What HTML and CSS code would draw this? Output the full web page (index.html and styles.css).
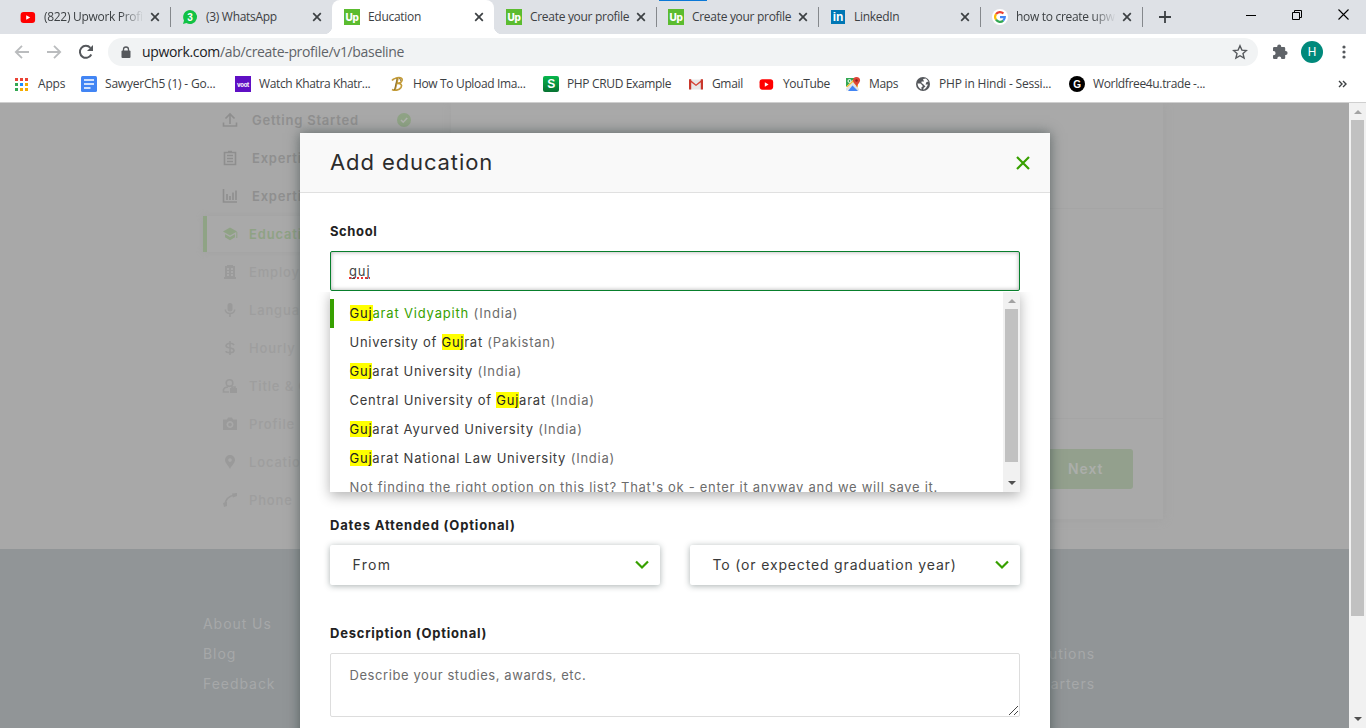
FILE: index.html
```html
<!DOCTYPE html>
<html lang="en">
<head>
<meta charset="utf-8">
<title>Education</title>
<link rel="stylesheet" href="styles.css">
</head>
<body>
<svg class="defs" width="0" height="0">
  <symbol id="x" viewBox="0 0 10 10"><path d="M1.2 1.2 8.8 8.8M8.8 1.2 1.2 8.8" stroke="#3c4043" stroke-width="1.7" fill="none"/></symbol>
  <symbol id="yt" viewBox="0 0 16 16"><rect x=".6" y="3" width="14.5" height="11" rx="3" fill="#f00"/><path d="M6.2 6.2 10.2 8.5 6.2 10.8z" fill="#fff"/></symbol>
</svg>
<header class="browser">
  <div class="tabs">
    <div class="loading"></div>
    <div class="tab sep"><svg class="ico"><use href="#yt"/></svg><span class="label fade">(822) Upwork Profi</span><svg class="close"><use href="#x"/></svg></div>
    <div class="tab"><svg class="ico" viewBox="0 0 16 16"><path d="M8 1a7 7 0 1 1-3.6 13L1 15l1-3.6A7 7 0 0 1 8 1z" fill="#12c245"/><text x="8" y="12" text-anchor="middle" class="wa">3</text></svg><span class="label">(3) WhatsApp</span><svg class="close"><use href="#x"/></svg></div>
    <div class="tab active"><span class="ico up">Up</span><span class="label">Education</span><svg class="close"><use href="#x"/></svg></div>
    <div class="tab sep"><span class="ico up">Up</span><span class="label">Create your profile</span><svg class="close"><use href="#x"/></svg></div>
    <div class="tab sep"><span class="ico up">Up</span><span class="label">Create your profile</span><svg class="close"><use href="#x"/></svg></div>
    <div class="tab sep"><span class="ico li">in</span><span class="label">LinkedIn</span><svg class="close"><use href="#x"/></svg></div>
    <div class="tab sep"><svg class="ico" viewBox="0 0 16 16"><circle cx="8" cy="8" r="8" fill="#fff"/><g fill="none" stroke-width="2.2"><path d="M4 5.2A4.8 4.8 0 0 1 11.4 4.6" stroke="#ea4335"/><path d="M4 10.7A4.8 4.8 0 0 1 4 5.2" stroke="#fbbc05"/><path d="M11.2 11.6A4.8 4.8 0 0 1 4 10.7" stroke="#34a853"/><path d="M8 8.1H12.8A4.8 4.8 0 0 1 11.2 11.6" stroke="#4285f4"/></g></svg><span class="label fade">how to create upw</span><svg class="close"><use href="#x"/></svg></div>
    <svg class="plus" viewBox="0 0 12 12"><path d="M6 0V12M0 6H12" stroke="#3c4043" stroke-width="1.8"/></svg>
    <div class="win">
      <svg width="10" height="10"><path d="M0 5.5H10" stroke="#000"/></svg>
      <svg width="10" height="10"><path d="M.5 2.5h7v7h-7zM2.5 2.5V.5h7v7h-2" fill="none" stroke="#000"/></svg>
      <svg width="11" height="11"><path d="M.5.5l10 10M10.500.5l-10 10" stroke="#000" stroke-width="1.1"/></svg>
    </div>
  </div>
  <div class="toolbar">
    <svg class="nav" viewBox="0 0 16 16"><path d="M15 8H2M8 1.800 1.800 8 8 14.200" fill="none" stroke="#babcbe" stroke-width="1.800"/></svg>
    <svg class="nav" viewBox="0 0 16 16"><path d="M1 8H14M8 1.800 14.200 8 8 14.200" fill="none" stroke="#babcbe" stroke-width="1.800"/></svg>
    <svg class="nav" viewBox="0 0 16 16"><path d="M13.300 10.500A6 6 0 1 1 12.400 3.800" fill="none" stroke="#55585c" stroke-width="2"/><path d="M15 1V7H9z" fill="#55585c"/></svg>
    <div class="omnibox">
      <svg class="lock" viewBox="0 0 10 13"><rect x="1" y="4.500" width="9" height="7.500" rx="1" fill="#55585c"/><path d="M3 5V3.500a2.500 2.500 0 0 1 5 0V5" fill="none" stroke="#55585c" stroke-width="1.300"/></svg>
      <div class="url">upwork.com<span>/ab/create-profile/v1/baseline</span></div>
      <svg class="star" viewBox="0 0 16 16"><path d="M8 1.800 9.900 6.100 14.500 6.500 11 9.600 12.100 14.100 8 11.700 3.900 14.100 5 9.600 1.500 6.500 6.100 6.100z" fill="none" stroke="#55585c" stroke-width="1.400"/></svg>
    </div>
    <svg class="puzzle" viewBox="0 0 16 16"><path d="M1 4.200Q1 3 2.200 3H5.200V2.600a2 2 0 0 1 4 0V3H12q1.200 0 1.200 1.200V7h.4a2 2 0 0 1 0 4h-.4v3q0 1-1.200 1H9.300v-.5a2 2 0 0 0-4 0V15H2.200Q1 15 1 14V11.300h.5a2.100 2.100 0 0 0 0-4.200H1z" fill="#5f6368"/></svg>
    <span class="avatar">H</span>
    <svg class="kebab" viewBox="0 0 4 14"><g fill="#55585c"><circle cx="2" cy="2" r="1.600"/><circle cx="2" cy="7" r="1.600"/><circle cx="2" cy="12" r="1.600"/></g></svg>
  </div>
  <nav class="bookmarks">
    <div class="bm apps"><svg class="ico" viewBox="0 0 16 16"><path d="M0 2h3v3H0zM5 2h3v3H5zM10 2h3v3h-3z" fill="#ea4335"/><path d="M0 7h3v3H0zM0 12h3v3H0z" fill="#34a853"/><path d="M5 7h3v3H5z" fill="#1a8cff"/><path d="M10 7h3v3h-3zM5 12h3v3H5zM10 12h3v3h-3z" fill="#f5ac00"/></svg><span>Apps</span></div>
    <div class="bm b2"><svg class="ico" viewBox="0 0 16 16"><rect width="16" height="16" rx="1.500" fill="#4285f4"/><path d="M3 4h10M3 8h10M3 12h6.500" stroke="#fff" stroke-width="1.700"/></svg><span>SawyerCh5 (1) - Go...</span></div>
    <div class="bm b3"><span class="ico voot">voot</span><span>Watch Khatra Khatr...</span></div>
    <div class="bm narrow b4"><svg class="ico" viewBox="0 0 15 16"><path d="M2 4.500C4 2 8 2 8 2L5 14M5 2.500C9 1 13 1.500 12 4.500 11.300 7 8 7.500 6.500 7.500 11 7 12.500 9 11 11.500 9 14.500 4.500 14.800 2 13.500" fill="none" stroke="#c39b38" stroke-width="1.700"/><path d="M9 2.500Q11 2.500 10.500 5M7 2.500 4.500 14" fill="none" stroke="#6e551d" stroke-width=".7"/></svg><span>How To Upload Ima...</span></div>
    <div class="bm b5"><span class="ico stx">S</span><span>PHP CRUD Example</span></div>
    <div class="bm narrow b6"><svg class="ico" viewBox="0 0 15 16"><path d="M1 3.500h12v10H1z" fill="#e8e8e8"/><path d="M1 3.500 7 8.500 13 3.500V5.500L7 10 1 5.500z" fill="#d54134"/><path d="M0 3.200h2.200v10.300H0zM11.800 3.200H14v10.300h-2.200z" fill="#c9382c"/></svg><span>Gmail</span></div>
    <div class="bm narrow b7"><svg class="ico"><use href="#yt" x="-1"/></svg><span>YouTube</span></div>
    <div class="bm narrow b8"><svg class="ico" viewBox="0 0 15 16"><path d="M0 2h9L0 11z" fill="#34a853"/><path d="M0 11 9 2h3v12z" fill="#fbc02d"/><path d="M0 12.500 7 6 13 13v1.500H0z" fill="#dfe3e7"/><path d="M2 15 6.500 9.500 12 15z" fill="#4285f4"/><path d="M10.500 1a3.600 3.600 0 0 1 3.600 3.600C14 7 11.500 8 10.700 11 10 8 7 7 7 4.600A3.600 3.600 0 0 1 10.500 1z" fill="#dc4437"/><circle cx="10.500" cy="4.500" r="1.200" fill="#8e2118"/><circle cx="3.500" cy="5" r="1.500" fill="none" stroke="#fff"/></svg><span>Maps</span></div>
    <div class="bm narrow b9"><svg class="ico" viewBox="0 0 15 16"><circle cx="7" cy="8" r="7" fill="#55585c"/><path d="M1.500 7.500H4.500L6.500 9.500V11H5.500V13.500Q2 12 1.500 7.500M7 3 10 2.500 12.500 5.500 10.500 6 9.500 8.500H12L10 12 7.500 14V12L9.500 10.500 7 8 5.500 7V5.500H8z" fill="#fff"/></svg><span>PHP in Hindi - Sessi...</span></div>
    <div class="bm b10"><span class="ico gg">G</span><span>Worldfree4u.trade -...</span></div>
    <svg class="more" viewBox="0 0 9 8"><path d="M1 1 4 4 1 7M5 1 8 4 5 7" fill="none" stroke="#3c4043" stroke-width="1.400"/></svg>
  </nav>
</header>

<main class="viewport">
  <div class="page">
    <div class="content">
      <aside class="steps">
        <div class="step done"><svg viewBox="0 0 16 16"><path d="M8 12V2.500M3.500 6.500 8 2 12.500 6.500M1.500 10.500V14h13V10.500" /></svg><span>Getting Started</span><svg class="check" viewBox="0 0 14 14"><circle cx="7" cy="7" r="7" fill="#8fa385" stroke="none"/><path d="M4 7 6.200 9.200 10.200 5" stroke="#b0b2ae"/></svg></div>
        <div class="step done"><svg viewBox="0 0 16 16"><path d="M2.500 2.500h11v12h-11zM5 5.500h6M5 8.500h6M5 11.500h6M6 1.500h4"/></svg><span>Expertise</span></div>
        <div class="step done"><svg viewBox="0 0 16 16"><path d="M1.500 1V14H15M5 6V12M8 8V12M11 4.500V12M14 2.500V12"/></svg><span>Expertise Level</span></div>
        <div class="step current"><svg viewBox="0 0 16 16"><path class="solid" d="M8 1.500 15 5.500 8 9.500 1 5.500zM3 8.300 8 11 13 8.300V11.300L8 14.200 3 11.300zM14.300 6h1v6h-1z"/></svg><span>Education</span></div>
        <div class="step"><svg viewBox="0 0 16 16"><path class="solid" fill-rule="evenodd" d="M3 2h2V1h6v1h2v11h1v2H2v-2h1zM5 4v2h2V4zM9 4v2h2V4zM5 7v2h2V7zM9 7v2h2V7zM5 10v2h2v-2zM9 10v2h2v-2z"/></svg><span>Employment</span></div>
        <div class="step"><svg viewBox="0 0 16 16"><rect class="solid" x="5.500" y="1" width="5" height="8.500" rx="2.500"/><path d="M3.300 7.500a4.700 4 0 0 0 9.400 0M8 12v3"/></svg><span>Languages</span></div>
        <div class="step"><svg viewBox="0 0 16 16"><path d="M12 5Q11 3.300 8 3.300T4 5.500Q4 7.500 8 8T12 10.500Q12 12.700 8 12.700T4 11M8 1V15"/></svg><span>Hourly Rate</span></div>
        <div class="step"><svg viewBox="0 0 16 16"><circle cx="7.500" cy="5" r="3.300"/><path d="M7 14H1.500V11.500Q2.500 9 6 9M10 10V9h3v1"/><path class="solid" d="M8 10h7v5H8z"/></svg><span>Title &amp; Overview</span></div>
        <div class="step"><svg viewBox="0 0 16 16"><path class="solid" fill-rule="evenodd" d="M1 3.500h4L6 1.500h4l1 2h4V14H1zM8 5a3.500 3.500 0 1 0 .01 0M8 6.700a1.800 1.800 0 1 1-.01 0"/></svg><span>Profile Photo</span></div>
        <div class="step"><svg viewBox="0 0 16 16"><path class="solid" fill-rule="evenodd" d="M8 1a5 5 0 0 1 5 5c0 3-3.500 5.500-5 9-1.500-3.500-5-6-5-9a5 5 0 0 1 5-5M8 4.200a1.800 1.800 0 1 0 .01 0"/></svg><span>Location</span></div>
        <div class="step"><svg viewBox="0 0 16 16"><path d="M3 13Q3.500 4.500 13 3" /><path class="solid" d="M1 11 5 10V14L2 15zM10 1.500 15 1V4L11 5.500z"/></svg><span>Phone</span></div>
      </aside>
      <section class="card">
        <div class="card-top"></div>
        <div class="card-mid"></div>
        <div class="card-foot"><span class="next">Next</span></div>
      </section>
    </div>
    <footer class="footer">
      <ul><li>About Us</li><li>Blog</li><li>Feedback</li></ul>
      <ul class="right"><li>Enterprise Solutions</li><li>Upwork Headquarters</li></ul>
    </footer>
  </div>
  <div class="scroll"><i class="up-arrow"></i><b></b><i class="down-arrow"></i></div>

  <div class="modal">
    <div class="modal-head"><h1>Add education</h1><svg width="14" height="14"><path d="M1 1 13 13M13 1 1 13" stroke="#37a000" stroke-width="2.200"/></svg></div>
    <div class="modal-body">
      <label class="lb-school">School</label>
      <div class="input"><span>guj</span>
        <div class="dropdown">
          <div class="options">
            <div class="opt sel o1"><mark>Guj</mark>arat Vidyapith <em>(India)</em></div>
            <div class="opt o2">University of <mark>Guj</mark>rat <em>(Pakistan)</em></div>
            <div class="opt o3"><mark>Guj</mark>arat University <em>(India)</em></div>
            <div class="opt o4">Central University of <mark>Guj</mark>arat <em>(India)</em></div>
            <div class="opt o5"><mark>Guj</mark>arat Ayurved University <em>(India)</em></div>
            <div class="opt o6"><mark>Guj</mark>arat National Law University <em>(India)</em></div>
            <div class="opt o7"><em>Not finding the right option on this list? That's ok - enter it anyway and we will save it.</em></div>
          </div>
          <div class="mini-scroll"><i class="up-arrow"></i><b></b><i class="down-arrow"></i></div>
        </div>
      </div>
      <label class="dates">Dates Attended (Optional)</label>
      <div class="selects">
        <div class="select"><span class="s1">From</span><svg width="14" height="10"><path d="M1 1.500 7 7.500 13 1.500" fill="none" stroke="#37a000" stroke-width="2.200"/></svg></div>
        <div class="select"><span class="s2">To (or expected graduation year)</span><svg width="14" height="10"><path d="M1 1.500 7 7.500 13 1.500" fill="none" stroke="#37a000" stroke-width="2.200"/></svg></div>
      </div>
      <label class="desc">Description (Optional)</label>
      <div class="area">Describe your studies, awards, etc.<svg class="grip" width="9" height="9"><path d="M0 9 9 0M5 9 9 5" stroke="#444" stroke-width="1"/></svg></div>
    </div>
  </div>
</main>
</body>
</html>
```
FILE: styles.css
```css
* { box-sizing: border-box; }
body { margin: 0; height: 728px; overflow: hidden; display: flex; flex-direction: column; font-family: Inter, sans-serif; background: #fff; }
svg { flex: none; display: block; }
.defs { position: absolute; }

/* Browser frame */
.browser { font-family: "Open Sans", "Noto Sans", sans-serif; font-size: 12px; color: #3c4043; height: 103px; border-bottom: 1px solid #cfcfcf; flex: none; }
.tabs { display: flex; height: 34px; background: #dee1e6; padding-left: 8px; position: relative; align-items: center; }
.loading { position: absolute; left: 659px; top: 0; width: 48px; height: 1px; background: #0a78d7; }
.tab { width: 162px; height: 34px; display: flex; align-items: center; padding: 0 10px 0 12px; position: relative; }
.tab.sep::after { content: ""; position: absolute; right: -1px; top: 7px; width: 1px; height: 20px; background: #85888c; }
.tab.active { background: #fff; border-radius: 8px 8px 0 0; }
.tab.active::before, .tab.active::after { content: ""; position: absolute; bottom: 0; width: 8px; height: 8px; }
.tab.active::before { left: -8px; background: radial-gradient(circle at 0 0, #dee1e6 8px, #fff 8.5px); }
.tab.active::after { right: -8px; background: radial-gradient(circle at 100% 0, #dee1e6 8px, #fff 8.5px); }
.ico { width: 16px; height: 16px; flex: none; display: flex; align-items: center; justify-content: center; line-height: 1; overflow: visible; }
.label { margin-left: 8px; width: 100px; white-space: nowrap; letter-spacing: -.3px; padding-bottom: 1px; }
.fade { -webkit-mask-image: linear-gradient(90deg, #000 76px, transparent 100px); mask-image: linear-gradient(90deg, #000 76px, transparent 100px); }
.close { width: 10px; height: 10px; margin-left: 6px; }
.up { background: #5bbc2f; color: #fff; font: 800 10px Inter, sans-serif; letter-spacing: -.3px; padding-bottom: 1px; }
.li { background: #0077b5; color: #fff; font: bold 12px "Liberation Sans", sans-serif; width: 14px; height: 14px; margin-right: 1px; margin-left: 1px; }
.wa { font: bold 10px "Liberation Sans", sans-serif; fill: #fff; }
.plus { width: 12px; height: 12px; margin-left: 17px; }
.win { margin-left: auto; display: flex; gap: 36px; padding: 0 17px 5px 0; align-items: center; }
.toolbar { height: 36px; display: flex; align-items: center; padding-left: 14px; }
.nav { width: 16px; height: 16px; margin-right: 16px; }
.omnibox { margin-left: -2px; width: 1150px; height: 28px; border-radius: 14px; background: #f1f3f4; display: flex; align-items: center; padding: 0 10px 0 12px; }
.lock { width: 11px; height: 13px; }
.url { font-size: 14px; color: #202124; margin-left: 11px; flex: 1; letter-spacing: -.33px; padding-bottom: 1px; }
.url span { color: #5f6368; }
.star { width: 16px; height: 16px; }
.puzzle { width: 16px; height: 16px; margin-left: 14px; }
.avatar { width: 22px; height: 22px; border-radius: 50%; background: #00897b; color: #fff; display: flex; align-items: center; justify-content: center; margin-left: 13px; font: 12px Roboto, sans-serif; }
.kebab { width: 4px; height: 14px; margin-left: 19px; }
.bookmarks { height: 32px; display: grid; align-items: center; padding: 0 0 4px 15px; grid-template-columns: 66px 154px 155px 153px 146px 71px 86px 70px 153px 269px 9px; }
.bm { display: flex; align-items: center; gap: 8px; white-space: nowrap; letter-spacing: -.35px; }
.bm span:last-child { padding-bottom: 1px; }
.b2, .b9 { letter-spacing: -.2px; }
.apps { gap: 7px; letter-spacing: -.2px; }
.narrow .ico { width: 15px; }
.voot { background: #5f0fc4; color: #fff; font: bold 6px Inter, sans-serif; letter-spacing: -.2px; }
.stx { border-radius: 2px; background: linear-gradient(#07b64c, #087332); color: #fff; font: bold 12px "Liberation Sans", sans-serif; }
.gg { border-radius: 50%; background: #000; color: #fff; font: bold 10px "Liberation Sans", sans-serif; }
.more { width: 9px; height: 8px; }

/* Dimmed page */
.viewport { flex: 1; position: relative; display: flex; overflow: hidden; background: #a8a8a8; }
.page { width: 1349px; height: 625px; display: flex; flex-direction: column; }
.content { height: 446px; display: flex; padding-left: 203px; overflow: hidden; }
.steps { width: 248px; margin-top: -2px; }
.step { height: 38px; display: flex; align-items: center; padding-left: 19px; color: #9e9e9e; font-size: 13px; font-weight: 500; letter-spacing: .85px; white-space: nowrap; overflow: hidden; }
.step svg { width: 16px; height: 16px; margin-right: 11px; fill: none; stroke: #9a9a9a; stroke-width: 1.6; }
.step .solid { fill: #9a9a9a; stroke: none; }
.step.done { color: #8f8f8f; font-weight: 600; letter-spacing: .78px; }
.step.done svg { stroke: #8e8e8e; margin-right: 14px; }
.step.done span { width: 145px; }
.step.done .check { width: 14px; height: 14px; margin: 0; }
.step.current { border-left: 4px solid #8fa385; padding-left: 15px; color: #8fa285; font-weight: 600; height: 36px; margin: 1px 0; box-shadow: 0 0 6px #a2a2a2; background: #a9a9a9; }
.step.current .solid { fill: #8fa285; }
.card { width: 712px; height: 416px; box-shadow: 1px 1px 8px #a3a3a3; background: #a9a9a9; display: flex; flex-direction: column; }
.card-top { height: 105px; }
.card-mid { height: 211px; border-top: 1px solid #a5a5a5; border-bottom: 1px solid #a5a5a5; }
.card-foot { flex: 1; display: flex; justify-content: flex-end; padding: 30px 30px 30px 0; }
.next { width: 100px; height: 40px; border-radius: 3px; background: #93a08d; color: #abaeaa; font-weight: 600; font-size: 14px; letter-spacing: .9px; padding: 0 0 0 35px; line-height: 40px; }
.footer { flex: 1; background: #919597; color: #a6a8a9; font-size: 14px; letter-spacing: .95px; padding: 60px 0 0 203px; display: flex; }
.footer ul { list-style: none; margin: 0; padding: 0; width: 400px; line-height: 30px; }
.footer .right { width: 492px; text-align: right; padding-top: 30px; }
.scroll { width: 17px; background: #f1f1f1; display: flex; flex-direction: column; align-items: center; }
.scroll b { width: 13px; height: 496px; background: #c1c1c1; }
.up-arrow { width: 0; height: 0; border: 4px solid transparent; border-top: 0; border-bottom-color: #a3a3a3; margin: 7px 0 6px; }
.down-arrow { width: 0; height: 0; border: 4px solid transparent; border-bottom: 0; border-top-color: #505050; margin: auto 0 7px; }

/* Education dialog */
.modal { position: absolute; left: 300px; top: 30px; width: 750px; height: 700px; background: #fff; box-shadow: 0 0 12px rgba(50, 65, 65, .65); color: #222; }
.modal-head { height: 60px; border-bottom: 1px solid #e0e0e0; background: #f9f9f9; display: flex; align-items: center; justify-content: space-between; padding: 0 20px 0 30px; }
h1 { margin: 0; padding-bottom: 2px; font-size: 22px; font-weight: 400; letter-spacing: .9px; color: #2c2c2c; }
.modal-body { padding: 28px 30px 0; display: flex; flex-direction: column; }
label { font-size: 13px; font-weight: 700; height: 20px; line-height: 20px; letter-spacing: .6px; }
.input { margin-top: 10px; height: 40px; border: 1px solid #087f2c; border-radius: 2px; box-shadow: inset 0 0 4px #aaa; padding-left: 18px; font-size: 13px; line-height: 39px; position: relative; color: #444; letter-spacing: .9px; }
.input > span { text-decoration: underline dotted #e33 1.5px; text-decoration-skip-ink: none; text-underline-offset: 1px; }
.dropdown { position: absolute; left: -1px; top: 39px; width: 690px; height: 201px; display: flex; background: #fff; box-shadow: 0 4px 12px rgba(0, 0, 0, .3); clip-path: inset(1px -20px -30px -20px); }
.options { flex: 1; overflow: hidden; padding-top: 8px; color: #3a3a3a; }
.opt { height: 29px; line-height: 28px; font-size: 13px; padding-left: 19.5px; white-space: nowrap; letter-spacing: .77px; }
.sel { border-left: 4px solid #37a000; padding-left: 15.5px; color: #37a000; }
.o1 { letter-spacing: .82px; }
.o2 { letter-spacing: .73px; }
.o7 { letter-spacing: .705px; }
.opt em { font-style: normal; color: #6c6c6c; }
mark { background: #ff0; color: #222; }
.mini-scroll { width: 17px; margin-top: 1px; background: #f1f1f1; display: flex; flex-direction: column; align-items: center; }
.mini-scroll b { width: 13px; height: 153px; background: #c1c1c1; }
.dates { margin-top: 224px; letter-spacing: .84px; }
.selects { display: flex; gap: 30px; margin-top: 10px; }
.select { flex: 1; height: 40px; border-radius: 2px; box-shadow: 0 1px 6px rgba(40, 60, 60, .4); display: flex; align-items: center; justify-content: space-between; padding: 0 11px 0 22.5px; font-size: 14px; letter-spacing: .84px; color: #3a3a3a; }
.select span { padding-bottom: 1px; }
.s1 { letter-spacing: 1.3px; }
.desc { margin-top: 38px; letter-spacing: .77px; }
.area { margin-top: 10px; height: 64px; border: 1px solid #ddd; border-radius: 2px; padding: 10px 18.5px; font-size: 13px; line-height: 22px; letter-spacing: .58px; color: #6c6c6c; position: relative; }
.grip { position: absolute; right: 1px; bottom: 1px; }
```
